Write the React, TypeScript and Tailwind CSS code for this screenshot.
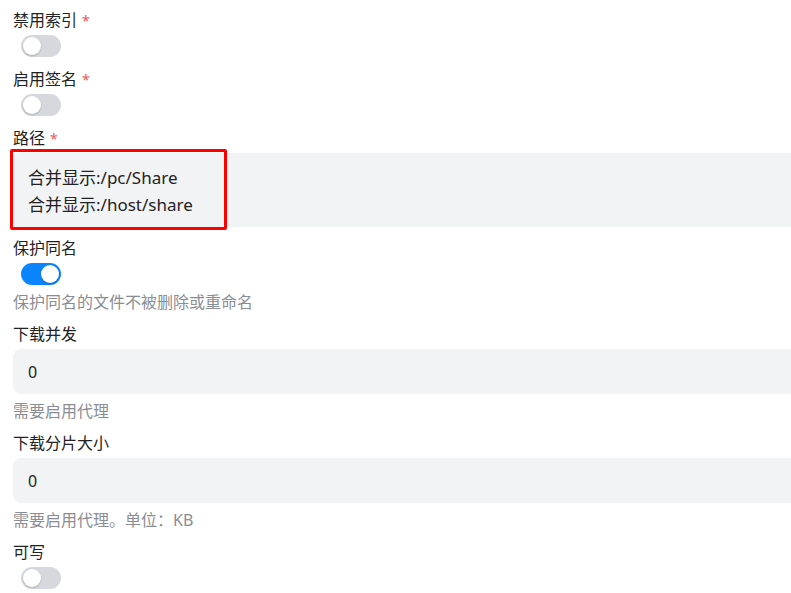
import { useState } from 'react'

const font = '"Noto Sans", "Noto Sans CJK SC", sans-serif'

function Label({ text, required }: { text: string; required?: boolean }) {
  return (
    <div className="mb-[4px] h-[22px] text-[16px] leading-[22px] text-[#222]">
      {text}
      {required && <span className="ml-[5px] text-[14px] text-[#f2545b]">*</span>}
    </div>
  )
}

function Toggle({ on }: { on: boolean }) {
  const [checked, setChecked] = useState(on)
  return (
    <div className="h-[23px] pl-[8px]">
      <button
        type="button"
        onClick={() => setChecked(!checked)}
        className={
          'relative flex h-[22px] w-[40px] items-center rounded-full px-[2px] ' +
          (checked ? 'justify-end bg-[#0a84ff]' : 'justify-start bg-[#d6d8dd]')
        }
      >
        <span className="block h-[18px] w-[18px] rounded-full bg-white shadow-[0_1px_2px_rgba(0,0,0,0.2)]" />
      </button>
    </div>
  )
}

function Help({ text }: { text: string }) {
  return <div className="mt-[5px] h-[22px] text-[16px] leading-[22px] text-[#8a8d93]">{text}</div>
}

function Field({ children }: { children: React.ReactNode }) {
  return <div className="mb-[10px] flex flex-col">{children}</div>
}

function NumberInput({ value }: { value: string }) {
  return (
    <input
      defaultValue={value}
      className="h-[45px] w-[820px] rounded-[8px] bg-[#f2f3f5] px-[15px] pt-[1px] text-[16px] text-[#222] outline-none"
    />
  )
}

export default function App() {
  return (
    <div className="h-[593px] overflow-hidden bg-white pl-[13px] pt-[9px] antialiased" style={{ fontFamily: font }}>
      <Field>
        <Label text="禁用索引" required />
        <Toggle on={false} />
      </Field>
      <Field>
        <Label text="启用签名" required />
        <Toggle on={false} />
      </Field>
      <Field>
        <Label text="路径" required />
        <div className="relative">
          <div className="h-[74px] w-[820px] rounded-[6px] bg-[#f2f3f5] px-[15px] pb-[9px] pt-[11px] text-[17px] leading-[27px] text-[#222]">
            <div>合并显示:/pc/Share</div>
            <div>合并显示:/host/share</div>
          </div>
          <div className="pointer-events-none absolute left-[-3px] top-[-4px] h-[81px] w-[217px] rounded-[2px] border-[3px] border-[#ff0000]" />
        </div>
      </Field>
      <div className="mb-[10px] flex flex-col">
        <Label text="保护同名" />
        <Toggle on={true} />
        <Help text="保护同名的文件不被删除或重命名" />
      </div>
      <Field>
        <Label text="下载并发" />
        <NumberInput value="0" />
        <div className="mt-[1px]">
          <Help text="需要启用代理" />
        </div>
      </Field>
      <Field>
        <Label text="下载分片大小" />
        <NumberInput value="0" />
        <div className="mt-[1px]">
          <Help text="需要启用代理。单位：KB" />
        </div>
      </Field>
      <Field>
        <Label text="可写" />
        <Toggle on={false} />
      </Field>
    </div>
  )
}
